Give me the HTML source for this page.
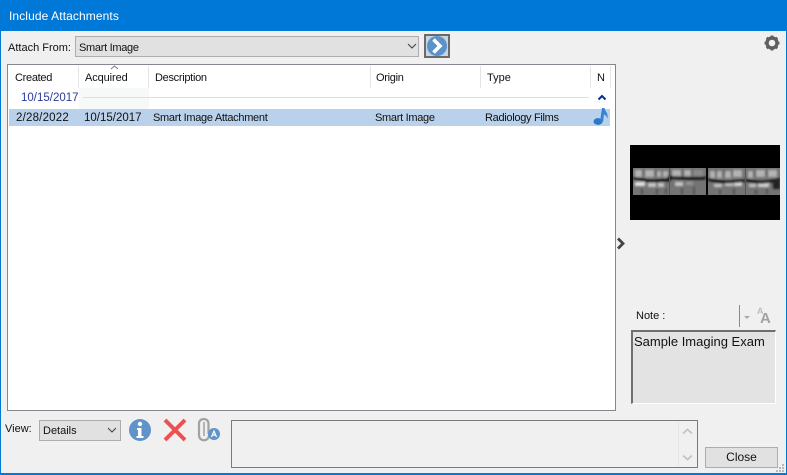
<!DOCTYPE html>
<html><head><meta charset="utf-8"><style>
html,body{margin:0;padding:0;width:787px;height:475px;overflow:hidden;background:#f0f0f0}
body{position:relative;font-family:"Liberation Sans",sans-serif;font-size:11px;letter-spacing:-.3px;color:#111}
.a{position:absolute;white-space:nowrap;line-height:14px}
.n{letter-spacing:0}
.d{font-size:11.500px;letter-spacing:0}
.sep{position:absolute;top:66px;height:22px;width:1px;background:#e4e4e4}
</style></head><body>
<div class="a" style="left:0;top:0;width:787px;height:31px;background:#0078d7"></div>
<div class="a" style="left:0;top:31px;width:1px;height:444px;background:#0078d7"></div>
<div class="a" style="left:786px;top:31px;width:1px;height:444px;background:#0078d7"></div>
<div class="a" style="left:0;top:473px;width:787px;height:2px;background:#0078d7"></div>
<div class="a" style="left:9px;top:9px;color:#fff;font-size:12px;letter-spacing:.1px">Include Attachments</div>

<div class="a n" style="left:8px;top:41px">Attach From:</div>
<div class="a" style="left:75px;top:36px;width:342px;height:19px;background:#e1e1e1;border:1px solid #adadad"></div>
<div class="a" style="left:79px;top:41px">Smart Image</div>
<svg class="a" style="left:407px;top:43px" width="10" height="7"><path d="M1 1l4 4 4-4" fill="none" stroke="#444" stroke-width="1.100"/></svg>
<svg class="a" style="left:424px;top:34px" width="26" height="24"><rect x="1" y="1" width="24" height="22" fill="#c8d6e4" stroke="#6a6a6a" stroke-width="2"/><circle cx="13" cy="12" r="10" fill="#5b92c8"/><path d="M9.500 5.500l6.500 6.500-6.500 6.500" fill="none" stroke="#fff" stroke-width="3.600"/></svg>
<svg class="a" style="left:764px;top:35px" width="16" height="16"><circle cx="8" cy="8" r="5" fill="none" stroke="#5e5e5e" stroke-width="3.400"/><path d="M8 .5v15M.5 8h15M2.700 2.700l10.600 10.600M13.300 2.700L2.700 13.300" stroke="#5e5e5e" stroke-width="2.600" stroke-dasharray="2.600 10"/></svg>

<div class="a" style="left:7px;top:64px;width:607px;height:345px;background:#fff;border:1px solid #828790"></div>
<div class="sep" style="left:78px"></div><div class="sep" style="left:148px"></div><div class="sep" style="left:370px"></div><div class="sep" style="left:480px"></div><div class="sep" style="left:590px"></div><div class="sep" style="left:610px"></div>
<div class="a" style="left:15px;top:71px">Created</div>
<div class="a" style="left:85px;top:71px;letter-spacing:-.1px">Acquired</div>
<svg class="a" style="left:110px;top:65px" width="9" height="5"><path d="M1 4l3.500-3 3.500 3" fill="none" stroke="#777"/></svg>
<div class="a" style="left:155px;top:71px">Description</div>
<div class="a" style="left:376px;top:71px">Origin</div>
<div class="a n" style="left:487px;top:71px">Type</div>
<div class="a n" style="left:597px;top:71px">N</div>

<div class="a" style="left:79px;top:88px;width:70px;height:21px;background:#f7f9f8"></div>
<div class="a d" style="left:21px;top:91px;color:#2a3a9c">10/15/2017</div>
<div class="a" style="left:83px;top:97px;width:506px;height:1px;background:#dcdfe9"></div>
<svg class="a" style="left:597px;top:94px" width="10" height="7"><path d="M1.500 5.500L5 2l3.500 3.500" fill="none" stroke="#06308c" stroke-width="2"/></svg>

<div class="a" style="left:9px;top:109px;width:601px;height:17px;background:#b9d1ea"></div>
<div class="a d" style="left:16px;top:111px;letter-spacing:.2px">2/28/2022</div>
<div class="a d" style="left:84px;top:111px">10/15/2017</div>
<div class="a" style="left:153px;top:111px">Smart Image Attachment</div>
<div class="a" style="left:375px;top:111px">Smart Image</div>
<div class="a" style="left:485px;top:111px">Radiology Films</div>
<svg class="a" style="left:592px;top:107px" width="18" height="19"><ellipse cx="6" cy="14.500" rx="4.500" ry="3.400" fill="#2a78c8"/><path d="M8 14.500L10 1h2.500c.5 3.500 4 5 3 10.500-1-2.500-2-3.500-3.500-4L11 15z" fill="#3584d4"/></svg>

<svg class="a" style="left:630px;top:145px" width="150" height="75">
<defs><filter id="b" x="-20%" y="-20%" width="140%" height="140%"><feGaussianBlur stdDeviation="1"/></filter></defs>
<rect width="150" height="75" fill="#000"/>
<rect x="3" y="23" width="147" height="27" fill="#747474"/>
<g filter="url(#b)">
<g fill="#b4b4b4">
<rect x="5" y="25" width="7" height="7"/><rect x="15" y="25" width="9" height="7"/><rect x="27" y="26" width="4" height="6"/><rect x="33" y="26" width="5" height="6"/>
<rect x="42" y="25" width="9" height="6"/><rect x="54" y="25" width="7" height="6"/><rect x="63" y="25" width="10" height="6" fill="#8a8a8a"/>
<rect x="80" y="26" width="5" height="7"/><rect x="87" y="26" width="5" height="7"/><rect x="95" y="26" width="6" height="7"/><rect x="103" y="25" width="9" height="7"/>
<rect x="118" y="26" width="5" height="7"/><rect x="126" y="25" width="9" height="7"/><rect x="138" y="25" width="9" height="7"/>
</g>
<g fill="#c8c8c8">
<rect x="5" y="37" width="10" height="4" fill="#e4e4e4"/><rect x="18" y="38" width="8" height="4"/><rect x="28" y="38" width="6" height="4"/><rect x="45" y="37" width="8" height="4"/><rect x="56" y="37" width="7" height="3" fill="#9a9a9a"/><rect x="84" y="39" width="8" height="3"/><rect x="95" y="38" width="8" height="3"/><rect x="104" y="37" width="8" height="4" fill="#dcdcdc"/><rect x="119" y="39" width="7" height="3"/><rect x="128" y="38" width="11" height="4" fill="#d4d4d4"/>
</g>
<path d="M3 33c10 1 12 3 18 3s12-1 18-1l0-3c10 1 20 2 37 1M78 34c6 2 10 3 18 3s12-1 19-1M116 35c8 2 14 3 20 2s8-1 14-3" fill="none" stroke="#0a0a0a" stroke-width="2.800"/>
<path d="M39 33h37" stroke="#0a0a0a" stroke-width="2"/>
<path d="M12 43v7M27 43v7M36 43v6M52 42v8M64 42v8M90 44v6M104 43v7M126 44v6M137 43v6M14 25v6M26 25v6M41 25v6M53 25v6M62 25v6M86 25v6M94 25v6M102 25v6M125 25v6M137 25v6" stroke="#3e3e3e" stroke-width="1.200"/>
<rect x="143" y="34" width="7" height="10" fill="#222"/>
</g>
<rect x="39" y="23" width="1" height="27" fill="#555"/><rect x="76" y="23" width="2" height="27" fill="#050505"/><rect x="115" y="23" width="1" height="27" fill="#555"/>
</svg>

<svg class="a" style="left:616px;top:237px" width="10" height="13"><path d="M2 1.500L7 6.500 2 11.500" fill="none" stroke="#444" stroke-width="2.800"/></svg>

<div class="a n" style="left:636px;top:309px">Note :</div>
<div class="a" style="left:739px;top:305px;width:1px;height:22px;background:#8a8a8a"></div>
<svg class="a" style="left:744px;top:316px" width="7" height="4"><path d="M0 0h6L3 3z" fill="#aaa"/></svg>
<div class="a n" style="left:757px;top:306px;font:bold 9px/11px 'Liberation Sans',sans-serif;color:#bdbdbd">A</div>
<div class="a n" style="left:760px;top:311px;font:bold 15px/15px 'Liberation Sans',sans-serif;color:#a2a2a2">A</div>
<div class="a" style="left:631px;top:330px;width:142px;height:71px;background:#e3e3e3;border:1px solid #fff;border-top:2px solid #6f6f6f;border-left:2px solid #6f6f6f"></div>
<div class="a n" style="left:634px;top:334px;font-size:13px;line-height:16px">Sample Imaging Exam</div>

<div class="a n" style="left:5px;top:422px">View:</div>
<div class="a" style="left:39px;top:420px;width:80px;height:19px;background:#e1e1e1;border:1px solid #adadad"></div>
<div class="a n" style="left:43px;top:424px">Details</div>
<svg class="a" style="left:107px;top:427px" width="10" height="7"><path d="M1 1l4 4 4-4" fill="none" stroke="#444" stroke-width="1.100"/></svg>
<svg class="a" style="left:128px;top:418px" width="24" height="24"><circle cx="12" cy="12" r="11" fill="#5f93c9"/><circle cx="12" cy="6" r="2.200" fill="#fff"/><path d="M9 10h4.500v8H15.500v2H8.500v-2h1.500v-6H9z" fill="#fff"/></svg>
<svg class="a" style="left:162px;top:418px" width="26" height="24"><path d="M3 2l20 20M23 2L3 22" stroke="#ee4f4f" stroke-width="4"/></svg>
<svg class="a" style="left:196px;top:416px" width="27" height="28"><path d="M12.500 18V7.500c0-6-9.500-6-9.500 0V19c0 7 10 7 10 0" fill="none" stroke="#a2a2a2" stroke-width="2.200"/><path d="M8 6v14" stroke="#b4b4b4" stroke-width="2"/><circle cx="18" cy="18" r="6" fill="#5f93c9"/><path d="M15.500 21l2.500-6 2.500 6M16.500 19h3" fill="none" stroke="#fff" stroke-width="1.200"/></svg>

<div class="a" style="left:231px;top:420px;width:465px;height:46px;background:#f0f0f0;border:1px solid #7a7a7a"></div>
<div class="a" style="left:678px;top:421px;width:1px;height:46px;background:#e6e6e6"></div>
<svg class="a" style="left:682px;top:428px" width="11" height="7"><path d="M1 5.500L5.500 1.500 10 5.500" fill="none" stroke="#c4c4c4" stroke-width="1.800"/></svg>
<svg class="a" style="left:682px;top:454px" width="11" height="7"><path d="M1 1.500L5.500 5.500 10 1.500" fill="none" stroke="#c4c4c4" stroke-width="1.800"/></svg>

<div class="a n" style="left:705px;top:447px;width:71px;height:19px;background:#e1e1e1;border:1px solid #adadad;text-align:center;line-height:19px;font-size:12px">Close</div>
<svg class="a" style="left:775px;top:463px" width="10" height="10" fill="#b8b8b8"><rect x="7" y="1" width="2" height="2"/><rect x="4" y="4" width="2" height="2"/><rect x="7" y="4" width="2" height="2"/><rect x="1" y="7" width="2" height="2"/><rect x="4" y="7" width="2" height="2"/><rect x="7" y="7" width="2" height="2"/></svg>
</body></html>
